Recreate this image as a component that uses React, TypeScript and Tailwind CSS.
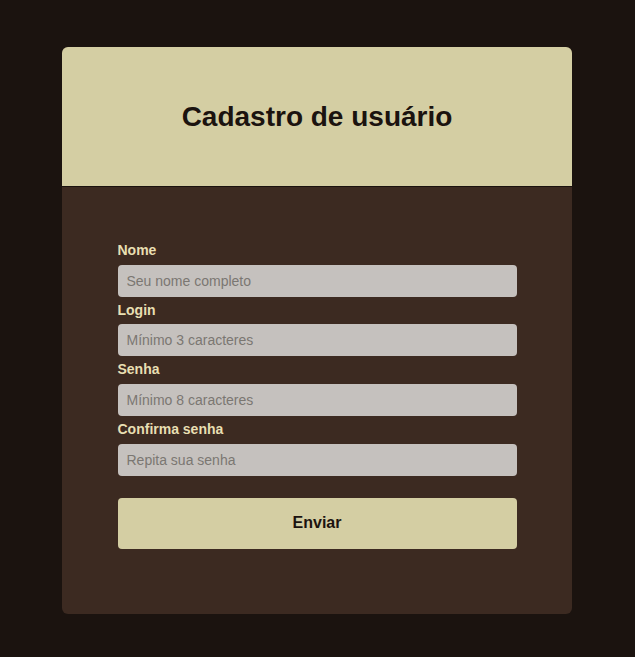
import React from "react";

const fields = [
  { label: "Nome", placeholder: "Seu nome completo", type: "text" },
  { label: "Login", placeholder: "Mínimo 3 caracteres", type: "text" },
  { label: "Senha", placeholder: "Mínimo 8 caracteres", type: "password" },
  { label: "Confirma senha", placeholder: "Repita sua senha", type: "password" },
];

export default function App() {
  return (
    <div
      className="min-h-[657px] w-full bg-[#1b130f] pt-[47px] pb-[44px] pr-[1px]"
      style={{ fontFamily: '"Liberation Sans", Arial, sans-serif' }}
    >
      <div className="mx-auto w-[510px] overflow-hidden rounded-md bg-[#3c2a21]">
        <div className="flex h-[140px] items-center justify-center border-b border-[#1b130f] bg-[#d4cea3]">
          <h1 className="text-[28px] font-bold leading-none text-[#1b130f]">Cadastro de usuário</h1>
        </div>
        <form className="mx-auto flex w-[399px] flex-col pt-[56px] pb-[65px]" onSubmit={(e) => e.preventDefault()}>
          {fields.map((f) => (
            <div key={f.label} className="flex flex-col">
              <label className="mb-[6px] text-[14px] font-bold leading-[15.7px] text-[#e8dfb2]">{f.label}</label>
              <input
                type={f.type}
                placeholder={f.placeholder}
                className="mb-[6px] h-[32px] rounded-[4px] bg-[#c5c1be] px-[9px] text-[14px] text-[#333] outline-none placeholder:text-[#7b7772]"
              />
            </div>
          ))}
          <button
            type="submit"
            className="mt-[16px] h-[51px] rounded-[4px] bg-[#d4cea3] text-[16px] font-bold text-[#1b130f]"
          >
            Enviar
          </button>
        </form>
      </div>
    </div>
  );
}
